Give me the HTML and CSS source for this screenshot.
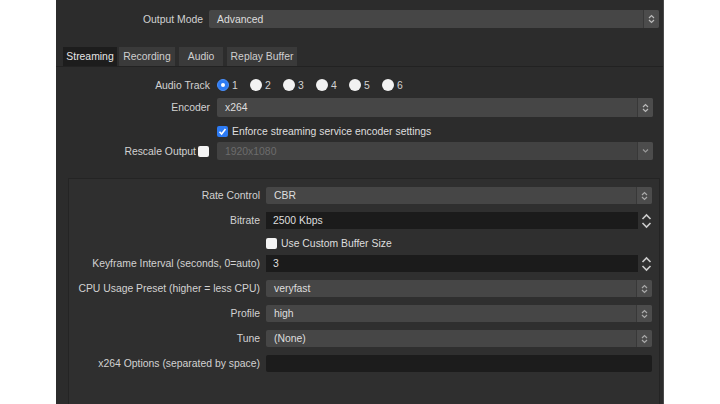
FILE: index.html
```html
<html>
    <head>
        <meta charset="utf-8" />
        <title>Output Settings</title>
        <link rel="stylesheet" href="styles.css">
    </head>
    <body>
        <div class="window">
            <div class="mode-row">
                <span class="mode-label">Output Mode</span>
                <div class="combo mode-combo">
                    <span class="value">Advanced</span>
                    <span class="arrows"><svg width="7" height="10" viewBox="0 0 7 10"><path d="M1 4 L3.5 1.5 L6 4 M1 6 L3.5 8.5 L6 6" fill="none" stroke="#bbb" stroke-width="1.2"/></svg></span>
                </div>
            </div>

            <div class="tabs">
                <span class="tab active">Streaming</span>
                <span class="tab">Recording</span>
                <span class="tab">Audio</span>
                <span class="tab">Replay Buffer</span>
            </div>

            <div class="page">
                <div class="row track-row">
                    <span class="label">Audio Track</span>
                    <div class="radios">
                        <span class="radio checked"></span><span class="num">1</span>
                        <span class="radio"></span><span class="num">2</span>
                        <span class="radio"></span><span class="num">3</span>
                        <span class="radio"></span><span class="num">4</span>
                        <span class="radio"></span><span class="num">5</span>
                        <span class="radio"></span><span class="num">6</span>
                    </div>
                </div>
                <div class="row encoder-row">
                    <span class="label">Encoder</span>
                    <div class="combo">
                        <span class="value">x264</span>
                        <span class="arrows"><svg width="7" height="10" viewBox="0 0 7 10"><path d="M1 4 L3.5 1.5 L6 4 M1 6 L3.5 8.5 L6 6" fill="none" stroke="#bbb" stroke-width="1.2"/></svg></span>
                    </div>
                </div>
                <div class="row check-row">
                    <span class="label"></span>
                    <span class="check checked"><svg width="9" height="9" viewBox="0 0 9 9"><path d="M1.5 4.8 L3.6 7 L7.5 2" fill="none" stroke="#fff" stroke-width="1.6"/></svg></span>
                    <span class="check-text">Enforce streaming service encoder settings</span>
                </div>
                <div class="row rescale-row">
                    <span class="label rescale-label">Rescale Output <span class="check"></span></span>
                    <div class="combo disabled">
                        <span class="value">1920x1080</span>
                        <span class="arrows"><svg width="7" height="10" viewBox="0 0 7 10"><path d="M1 3.5 L3.5 6 L6 3.5" fill="none" stroke="#999" stroke-width="1.2"/></svg></span>
                    </div>
                </div>

                <div class="group">
                    <div class="grow">
                        <span class="glabel">Rate Control</span>
                        <div class="combo">
                            <span class="value">CBR</span>
                            <span class="arrows"><svg width="7" height="10" viewBox="0 0 7 10"><path d="M1 4 L3.5 1.5 L6 4 M1 6 L3.5 8.5 L6 6" fill="none" stroke="#aaa" stroke-width="1.2"/></svg></span>
                        </div>
                    </div>
                    <div class="grow">
                        <span class="glabel">Bitrate</span>
                        <div class="spin">
                            <span class="field">2500 Kbps</span>
                            <span class="spin-arrows"><svg width="11" height="16" viewBox="0 0 11 16"><path d="M1.5 6 L5.5 2 L9.5 6 M1.5 10 L5.5 14 L9.5 10" fill="none" stroke="#ccc" stroke-width="1.6"/></svg></span>
                        </div>
                    </div>
                    <div class="grow buffer-row">
                        <span class="glabel"></span>
                        <span class="check"></span>
                        <span class="check-text">Use Custom Buffer Size</span>
                    </div>
                    <div class="grow">
                        <span class="glabel">Keyframe Interval (seconds, 0=auto)</span>
                        <div class="spin">
                            <span class="field">3</span>
                            <span class="spin-arrows"><svg width="11" height="16" viewBox="0 0 11 16"><path d="M1.5 6 L5.5 2 L9.5 6 M1.5 10 L5.5 14 L9.5 10" fill="none" stroke="#ccc" stroke-width="1.6"/></svg></span>
                        </div>
                    </div>
                    <div class="grow">
                        <span class="glabel">CPU Usage Preset (higher = less CPU)</span>
                        <div class="combo">
                            <span class="value">veryfast</span>
                            <span class="arrows"><svg width="7" height="10" viewBox="0 0 7 10"><path d="M1 4 L3.5 1.5 L6 4 M1 6 L3.5 8.5 L6 6" fill="none" stroke="#aaa" stroke-width="1.2"/></svg></span>
                        </div>
                    </div>
                    <div class="grow">
                        <span class="glabel">Profile</span>
                        <div class="combo">
                            <span class="value">high</span>
                            <span class="arrows"><svg width="7" height="10" viewBox="0 0 7 10"><path d="M1 4 L3.5 1.5 L6 4 M1 6 L3.5 8.5 L6 6" fill="none" stroke="#aaa" stroke-width="1.2"/></svg></span>
                        </div>
                    </div>
                    <div class="grow">
                        <span class="glabel">Tune</span>
                        <div class="combo">
                            <span class="value">(None)</span>
                            <span class="arrows"><svg width="7" height="10" viewBox="0 0 7 10"><path d="M1 4 L3.5 1.5 L6 4 M1 6 L3.5 8.5 L6 6" fill="none" stroke="#aaa" stroke-width="1.2"/></svg></span>
                        </div>
                    </div>
                    <div class="grow">
                        <span class="glabel">x264 Options (separated by space)</span>
                        <div class="text-field"></div>
                    </div>
                </div>
            </div>
        </div>
    </body>
</html>
```

FILE: styles.css
```css
html, body {
    margin: 0;
    padding: 0;
    background: #fff;
    font-family: "Liberation Sans", Arial, sans-serif;
    font-size: 10.4px;
    color: #d2d2d2;
}

.window {
    margin-left: 56px;
    width: 607px;
    height: 404px;
    overflow: hidden;
    background: #2c2c2c;
    border-right: 1px solid #4a4a4a;
    padding-top: 10px;
    box-sizing: content-box;
}

/* output mode */
.mode-row {
    display: flex;
    align-items: center;
    height: 18px;
}

.mode-label {
    width: 147px;
    text-align: right;
    margin-right: 6px;
}

.mode-combo {
    width: 450px;
    flex: none !important;
}

/* combo boxes */
.combo {
    flex: 1;
    display: flex;
    align-items: stretch;
    height: 100%;
    background: #464646;
    border-radius: 2px;
}

.combo .value {
    flex: 1;
    display: flex;
    align-items: center;
    padding-left: 8px;
    color: #dedede;
}

.combo .arrows {
    width: 15px;
    display: flex;
    align-items: center;
    justify-content: center;
    background: #4c4c4c;
    border-left: 1px solid #383838;
    border-radius: 0 2px 2px 0;
}

.combo.disabled {
    background: #424242;
}

.combo.disabled .value {
    color: #6c6c6c;
}

/* tabs */
.tabs {
    display: flex;
    gap: 2px;
    margin-top: 19px;
    padding-left: 7px;
    height: 19px;
    border-bottom: 1px solid #222;
}

.tab {
    display: flex;
    align-items: center;
    justify-content: center;
    height: 19px;
    background: #3a3a3a;
    color: #cfcfcf;
}

.tab:nth-child(1) { width: 54px; }
.tab:nth-child(2) { width: 56px; }
.tab:nth-child(3) { width: 44px; margin-left: 2px; }
.tab:nth-child(4) { width: 70px; margin-left: 2px; }

.tab.active {
    background: #1d1d1d;
    color: #e6e6e6;
}

/* streaming page */
.row {
    display: flex;
    align-items: center;
    margin-right: 10px;
}

.label {
    width: 154px;
    flex: none;
    text-align: right;
    margin-right: 7px;
    white-space: nowrap;
}

.track-row {
    height: 14px;
    margin-top: 11px;
}

.radios {
    display: flex;
    align-items: center;
}

.radio {
    width: 12px;
    height: 12px;
    border-radius: 50%;
    background: #f2f2f2;
    box-sizing: border-box;
}

.radio.checked {
    background: #2d7bf4;
    border: 1px solid #4b90fa;
    position: relative;
}

.radio.checked::after {
    content: "";
    position: absolute;
    left: 3px;
    top: 3px;
    width: 4px;
    height: 4px;
    border-radius: 50%;
    background: #fff;
}

.num {
    margin-left: 3px;
    width: 18px;
}

.encoder-row {
    height: 19px;
    margin-top: 6px;
}

.check-row {
    height: 12px;
    margin-top: 8px;
}

.check {
    display: inline-flex;
    align-items: center;
    justify-content: center;
    width: 11px;
    height: 11px;
    border-radius: 2px;
    background: #f4f4f4;
    flex: none;
    vertical-align: middle;
}

.check.checked {
    background: #2d7bf4;
}

.check-text {
    margin-left: 4px;
    color: #dedede;
}

.rescale-row {
    height: 18px;
    margin-top: 5px;
}

.rescale-label {
    display: flex;
    justify-content: flex-end;
    align-items: center;
    gap: 2px;
    width: 153px;
    margin-right: 8px;
}

/* encoder group */
.group {
    margin: 18px 3px 0 12px;
    height: 240px;
    background: #2f2f2f;
    border: 1px solid #242424;
    padding: 8px 7px 0 0;
    display: flex;
    flex-direction: column;
    gap: 8px;
}

.grow {
    display: flex;
    align-items: center;
    height: 17px;
}

.glabel {
    width: 191px;
    flex: none;
    text-align: right;
    margin-right: 6px;
    white-space: nowrap;
}

.buffer-row {
    height: 14px;
    margin: -1px 0 -3px;
}

.spin {
    flex: 1;
    display: flex;
    height: 100%;
}

.spin .field {
    flex: 1;
    display: flex;
    align-items: center;
    padding-left: 7px;
    background: #1b1b1b;
    color: #dedede;
}

.spin-arrows {
    width: 14px;
    display: flex;
    align-items: center;
    justify-content: flex-end;
}

.text-field {
    flex: 1;
    height: 100%;
    background: #1c1c1c;
    border-radius: 2px;
}
```
